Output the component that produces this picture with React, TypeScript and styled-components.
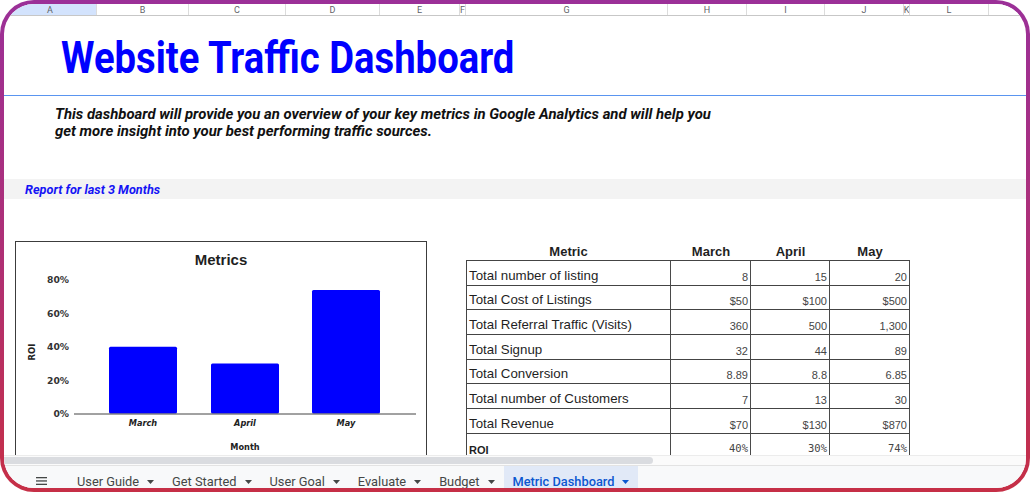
import styled, { createGlobalStyle } from "styled-components";

const GlobalStyle = createGlobalStyle`
  html, body {
    margin: 0;
    padding: 0;
    background: #ffffff;
  }
  * {
    box-sizing: border-box;
  }
`;

const Frame = styled.div`
  width: 1030px;
  height: 492px;
  border: 4px solid transparent;
  border-radius: 34px;
  background: linear-gradient(#ffffff, #ffffff) padding-box,
    linear-gradient(180deg, #9b3098 0%, #b02f72 55%, #c62f46 100%) border-box;
  overflow: hidden;
  display: flex;
  flex-direction: column;
  font-family: "Liberation Sans", Arial, sans-serif;
`;

const ColumnHeader = styled.div`
  display: flex;
  height: 12px;
  flex-shrink: 0;
  border-bottom: 1px solid #c7c7c7;
`;

const ColumnCell = styled.div<{ $w: number; $active?: boolean }>`
  width: ${(p) => p.$w}px;
  flex-shrink: 0;
  overflow: hidden;
  display: flex;
  justify-content: center;
  align-items: flex-end;
  font-family: Roboto, sans-serif;
  font-size: 9px;
  line-height: 9px;
  color: #5f6368;
  background: ${(p) => (p.$active ? "#d3e3fd" : "#ffffff")};
  border-right: 1px solid #dcdcdc;
`;

const TitleRow = styled.div`
  height: 80px;
  flex-shrink: 0;
  display: flex;
  align-items: center;
  padding: 3px 0 0 57px;
  border-bottom: 1px solid #5a95f0;
`;

const Title = styled.h1`
  margin: 0;
  font-family: Roboto, sans-serif;
  font-weight: 700;
  font-size: 45px;
  line-height: 1;
  color: #0000ff;
  white-space: nowrap;
  transform: scaleX(0.85);
  transform-origin: left center;
`;

const Intro = styled.p`
  height: 83px;
  flex-shrink: 0;
  margin: 0;
  padding: 10px 0 0 51px;
  font-family: Roboto, sans-serif;
  font-weight: 700;
  font-style: italic;
  font-size: 14.9px;
  line-height: 17px;
  color: #111111;
  white-space: nowrap;
`;

const Band = styled.div`
  height: 20px;
  flex-shrink: 0;
  display: flex;
  align-items: center;
  padding-left: 21px;
  background: #f3f3f3;
  font-family: Roboto, sans-serif;
  font-weight: 700;
  font-style: italic;
  font-size: 12.7px;
  color: #1414f5;
`;

const Main = styled.div`
  height: 256px;
  flex-shrink: 0;
  overflow: hidden;
  display: flex;
  align-items: flex-start;
  gap: 39px;
  padding: 42px 0 0 11px;
`;

const ChartBox = styled.div`
  width: 412px;
  height: 240px;
  flex-shrink: 0;
  border: 1px solid #3c3c3c;
  background: #ffffff;
`;

const MetricsTable = styled.div`
  display: flex;
  flex-direction: column;
`;

const HeadRow = styled.div`
  display: grid;
  grid-template-columns: 205px 80px 79px 80px;
  height: 19px;
`;

const HeadCell = styled.div`
  display: flex;
  align-items: center;
  justify-content: center;
  padding-top: 2px;
  font-weight: 700;
  font-size: 13px;
  color: #1f1f1f;
`;

const Body = styled.div`
  display: grid;
  grid-template-columns: 204px 80px 79px 80px;
  border-top: 1px solid #444444;
  border-left: 1px solid #444444;
`;

const Cell = styled.div<{ $label?: boolean; $roi?: boolean }>`
  height: ${(p) => (p.$roi ? "26px" : "24.7px")};
  display: flex;
  align-items: ${(p) => (p.$roi ? "flex-start" : "flex-end")};
  justify-content: ${(p) => (p.$label ? "flex-start" : "flex-end")};
  padding: ${(p) =>
    p.$roi ? (p.$label ? "8px 0 0 2px" : "8px 2px 0 0") : p.$label ? "0 0 1px 2px" : "0 2px 1px 0"};
  border-right: 1px solid #4a4a4a;
  border-bottom: 1px solid #444444;
  white-space: nowrap;
  font-family: ${(p) =>
    p.$roi && !p.$label ? '"DejaVu Sans Mono", "Liberation Mono", monospace' : '"Liberation Sans", Arial, sans-serif'};
  font-weight: ${(p) => (p.$roi && p.$label ? 700 : 400)};
  font-size: ${(p) => (p.$label ? (p.$roi ? "11px" : "13.3px") : p.$roi ? "10.5px" : "11px")};
  line-height: ${(p) => (p.$label ? "16px" : "13px")};
  color: ${(p) => (p.$label ? "#1f1f1f" : "#454545")};
`;

const ScrollRow = styled.div`
  height: 10px;
  flex-shrink: 0;
  display: flex;
  align-items: center;
  background: #fbfbfb;
  border-top: 1px solid #ececec;
`;

const ScrollThumb = styled.div`
  width: 649px;
  height: 7px;
  border-radius: 0 4px 4px 0;
  background: #dadce0;
`;

const TabBar = styled.div`
  height: 30px;
  flex-shrink: 0;
  display: flex;
  align-items: stretch;
  padding-left: 4px;
  background: #f8f9fa;
  border-top: 1px solid #e3e3e3;
`;

const MenuButton = styled.div`
  width: 60px;
  display: flex;
  align-items: center;
  padding: 1px 0 0 28px;
  color: #444746;
`;

const Tab = styled.div<{ $active?: boolean }>`
  display: flex;
  align-items: center;
  gap: 8px;
  padding: 2px 9px 0 9px;
  font-family: Roboto, sans-serif;
  font-size: 12.8px;
  font-weight: ${(p) => (p.$active ? 500 : 400)};
  color: ${(p) => (p.$active ? "#0b57d0" : "#444746")};
  background: ${(p) => (p.$active ? "#e1e9f7" : "transparent")};
  white-space: nowrap;
`;

const columns: [string, number][] = [
  ["A", 93],
  ["B", 92],
  ["C", 97],
  ["D", 94],
  ["E", 80],
  ["F", 6],
  ["G", 202],
  ["H", 79],
  ["I", 78],
  ["J", 79],
  ["K", 6],
  ["L", 79],
  ["", 40],
];

const rows: { label: string; values: string[]; roi?: boolean }[] = [
  { label: "Total number of listing", values: ["8", "15", "20"] },
  { label: "Total Cost of Listings", values: ["$50", "$100", "$500"] },
  { label: "Total Referral Traffic (Visits)", values: ["360", "500", "1,300"] },
  { label: "Total Signup", values: ["32", "44", "89"] },
  { label: "Total Conversion", values: ["8.89", "8.8", "6.85"] },
  { label: "Total number of Customers", values: ["7", "13", "30"] },
  { label: "Total Revenue", values: ["$70", "$130", "$870"] },
  { label: "ROI", values: ["40%", "30%", "74%"], roi: true },
];

const bars = [
  { month: "March", roi: 40, x: 93 },
  { month: "April", roi: 30, x: 195 },
  { month: "May", roi: 74, x: 296 },
];

const tabs = ["User Guide", "Get Started", "User Goal", "Evaluate", "Budget", "Metric Dashboard"];

const BASE = 171.5;
const UNIT = 1.67;
const AXIS_FONT = "DejaVu Sans, Verdana, sans-serif";

function RoiChart() {
  return (
    <svg width="410" height="238" viewBox="0 0 410 238" fontFamily="Liberation Sans, Arial, sans-serif">
      <text x="205" y="23" textAnchor="middle" fontSize="15" fontWeight="700" fill="#1f1f1f">
        Metrics
      </text>
      {[80, 60, 40, 20, 0].map((v) => (
        <text
          key={v}
          x="53"
          y={BASE - v * UNIT + 3.5}
          textAnchor="end"
          fontFamily={AXIS_FONT}
          fontSize="9.2"
          fontWeight="700"
          fill="#333"
        >
          {v}%
        </text>
      ))}
      <text
        x="16"
        y="110"
        textAnchor="middle"
        fontFamily={AXIS_FONT}
        fontSize="8.5"
        fontWeight="700"
        fill="#222"
        transform="rotate(-90 16 110)"
        dominantBaseline="middle"
      >
        ROI
      </text>
      {bars.map((b) => (
        <g key={b.month}>
          <rect x={b.x} y={BASE - b.roi * UNIT} width="68" height={b.roi * UNIT} rx="1.5" fill="#0000ff" />
          <text
            x={b.x + 34}
            y="184"
            textAnchor="middle"
            fontFamily={AXIS_FONT}
            fontSize="8.2"
            fontWeight="700"
            fontStyle="italic"
            fill="#222"
          >
            {b.month}
          </text>
        </g>
      ))}
      <line x1="58" y1={BASE + 0.5} x2="400" y2={BASE + 0.5} stroke="#444" strokeWidth="1" />
      <text x="229" y="208" textAnchor="middle" fontFamily={AXIS_FONT} fontSize="8.2" fontWeight="700" fill="#222">
        Month
      </text>
    </svg>
  );
}

function Caret() {
  return (
    <svg width="7" height="4" viewBox="0 0 7 4">
      <path d="M0 0h7L3.5 4z" fill="currentColor" />
    </svg>
  );
}

export default function App() {
  return (
    <>
      <GlobalStyle />
      <Frame>
        <ColumnHeader>
          {columns.map(([name, w], i) => (
            <ColumnCell key={i} $w={w} $active={name === "A"}>
              {name}
            </ColumnCell>
          ))}
        </ColumnHeader>
        <TitleRow>
          <Title>Website Traffic Dashboard</Title>
        </TitleRow>
        <Intro>
          This dashboard will provide you an overview of your key metrics in Google Analytics and will help you
          <br />
          get more insight into your best performing traffic sources.
        </Intro>
        <Band>Report for last 3 Months</Band>
        <Main>
          <ChartBox>
            <RoiChart />
          </ChartBox>
          <MetricsTable>
            <HeadRow>
              <HeadCell>Metric</HeadCell>
              <HeadCell>March</HeadCell>
              <HeadCell>April</HeadCell>
              <HeadCell>May</HeadCell>
            </HeadRow>
            <Body>
              {rows.flatMap((r) => [
                <Cell key={r.label} $label $roi={r.roi}>
                  {r.label}
                </Cell>,
                ...r.values.map((v, i) => (
                  <Cell key={r.label + i} $roi={r.roi}>
                    {v}
                  </Cell>
                )),
              ])}
            </Body>
          </MetricsTable>
        </Main>
        <ScrollRow>
          <ScrollThumb />
        </ScrollRow>
        <TabBar>
          <MenuButton>
            <svg width="11" height="8" viewBox="0 0 11 8">
              <rect y="0" width="11" height="1.3" fill="currentColor" />
              <rect y="3.3" width="11" height="1.3" fill="currentColor" />
              <rect y="6.7" width="11" height="1.3" fill="currentColor" />
            </svg>
          </MenuButton>
          {tabs.map((t) => (
            <Tab key={t} $active={t === "Metric Dashboard"}>
              {t}
              <Caret />
            </Tab>
          ))}
        </TabBar>
      </Frame>
    </>
  );
}
